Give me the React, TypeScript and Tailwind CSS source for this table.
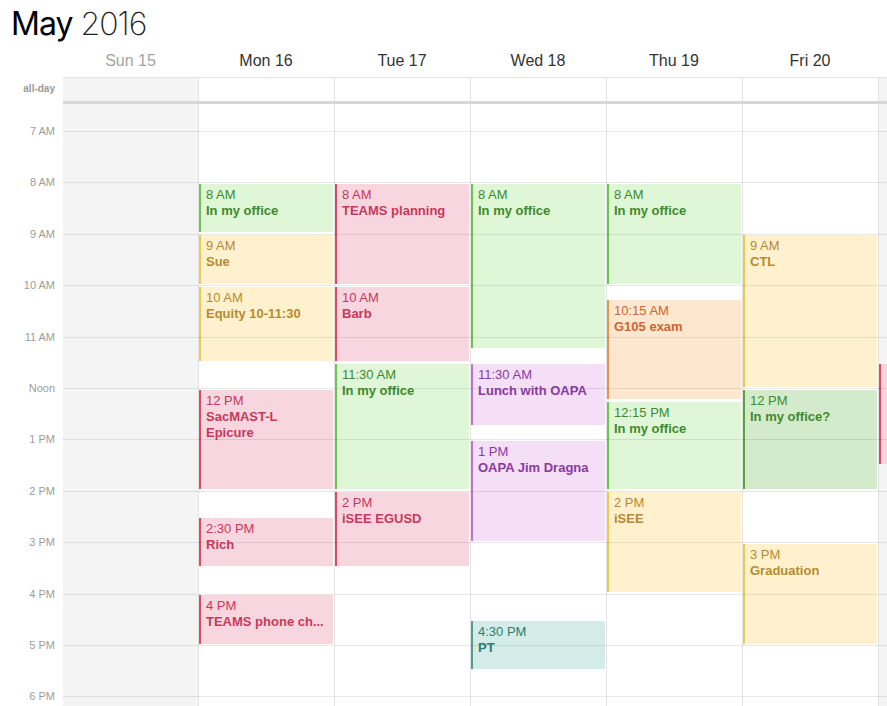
import React from "react";

const H = 51.4;
const TOP0 = 27; // offset of 7 AM line in timed area
const yOf = (h: number) => TOP0 + (h - 7) * H;

type Color = "green" | "green2" | "yellow" | "pink" | "orange" | "purple" | "teal";

const colorCls: Record<Color, string> = {
  green: "bg-[#dcf5d3]/90 border-[#6cc551] text-[#3f8a2c]",
  green2: "bg-[#d2eac8]/95 border-[#56a63a] text-[#3f8a2c]",
  yellow: "bg-[#fff0c9]/90 border-[#efc84f] text-[#b88a30]",
  pink: "bg-[#f7d1dd]/90 border-[#d84a68] text-[#c8385a]",
  orange: "bg-[#fde4c9]/90 border-[#e7954a] text-[#cf6533]",
  purple: "bg-[#f3dcf6]/90 border-[#bf74d0] text-[#8b3a9e]",
  teal: "bg-[#cfeae5]/90 border-[#4f9e90] text-[#2f7c70]",
};

type Ev = { s: number; e: number; time: string; title: string[]; c: Color };

const days: { label: string; muted?: boolean; gray?: boolean; w: string; hw: string; events: Ev[] }[] = [
  { label: "Sun 15", muted: true, gray: true, w: "w-[135px]", hw: "w-[135px]", events: [] },
  {
    label: "Mon 16",
    w: "w-[136px] border-l",
    hw: "w-[136px]",
    events: [
      { s: 8, e: 9, time: "8 AM", title: ["In my office"], c: "green" },
      { s: 9, e: 10, time: "9 AM", title: ["Sue"], c: "yellow" },
      { s: 10, e: 11.5, time: "10 AM", title: ["Equity 10-11:30"], c: "yellow" },
      { s: 12, e: 14, time: "12 PM", title: ["SacMAST-L", "Epicure"], c: "pink" },
      { s: 14.5, e: 15.5, time: "2:30 PM", title: ["Rich"], c: "pink" },
      { s: 16, e: 17, time: "4 PM", title: ["TEAMS phone ch..."], c: "pink" },
    ],
  },
  {
    label: "Tue 17",
    w: "w-[136px] border-l",
    hw: "w-[136px]",
    events: [
      { s: 8, e: 10, time: "8 AM", title: ["TEAMS planning"], c: "pink" },
      { s: 10, e: 11.5, time: "10 AM", title: ["Barb"], c: "pink" },
      { s: 11.5, e: 14, time: "11:30 AM", title: ["In my office"], c: "green" },
      { s: 14, e: 15.5, time: "2 PM", title: ["iSEE EGUSD"], c: "pink" },
    ],
  },
  {
    label: "Wed 18",
    w: "w-[136px] border-l",
    hw: "w-[136px]",
    events: [
      { s: 8, e: 11.25, time: "8 AM", title: ["In my office"], c: "green" },
      { s: 11.5, e: 12.75, time: "11:30 AM", title: ["Lunch with OAPA"], c: "purple" },
      { s: 13, e: 15, time: "1 PM", title: ["OAPA Jim Dragna"], c: "purple" },
      { s: 16.5, e: 17.5, time: "4:30 PM", title: ["PT"], c: "teal" },
    ],
  },
  {
    label: "Thu 19",
    w: "w-[136px] border-l",
    hw: "w-[136px]",
    events: [
      { s: 8, e: 10, time: "8 AM", title: ["In my office"], c: "green" },
      { s: 10.25, e: 12.25, time: "10:15 AM", title: ["G105 exam"], c: "orange" },
      { s: 12.25, e: 14, time: "12:15 PM", title: ["In my office"], c: "green" },
      { s: 14, e: 16, time: "2 PM", title: ["iSEE"], c: "yellow" },
    ],
  },
  {
    label: "Fri 20",
    w: "w-[136px] border-l",
    hw: "w-[136px]",
    events: [
      { s: 9, e: 12, time: "9 AM", title: ["CTL"], c: "yellow" },
      { s: 12, e: 14, time: "12 PM", title: ["In my office?"], c: "green2" },
      { s: 15, e: 17, time: "3 PM", title: ["Graduation"], c: "yellow" },
    ],
  },
  {
    label: "",
    gray: true,
    w: "w-[136px] border-l",
    hw: "w-[136px]",
    events: [{ s: 11.5, e: 13.5, time: "", title: [], c: "pink" }],
  },
];

const hours = ["7 AM", "8 AM", "9 AM", "10 AM", "11 AM", "Noon", "1 PM", "2 PM", "3 PM", "4 PM", "5 PM", "6 PM"];

export default function App() {
  return (
    <div
      className="w-[887px] h-[706px] overflow-hidden bg-white text-[#333]"
      style={{ fontFamily: '"Liberation Sans", Arial, sans-serif' }}
    >
      {/* Title */}
      <div
        className="h-[44px] pl-[11px] pt-[4px] leading-[40px] text-[32px] tracking-[-1px]"
        style={{ fontFamily: 'Inter, "Liberation Sans", sans-serif' }}
      >
        <span className="font-normal text-black">May</span>{" "}
        <span className="font-extralight text-[#222]">2016</span>
      </div>

      {/* Day header */}
      <div className="flex h-[33px]">
        <div className="w-[63px] shrink-0" />
        <div className="flex overflow-hidden">
          {days.map((d, i) => (
            <div
              key={i}
              className={`${d.hw} shrink-0 text-center text-[16px] leading-[33px] ${d.muted ? "text-[#a3a3a3]" : "text-[#333]"}`}
            >
              {d.label}
            </div>
          ))}
        </div>
      </div>

      {/* All-day row */}
      <div className="flex h-[24px]">
        <div className="w-[63px] shrink-0 pr-[8px] text-right text-[10px] font-bold leading-[24px] text-[#9a9a9a]">all-day</div>
        <div className="flex flex-1 overflow-hidden border-t border-[#e3e3e3]">
          {days.map((d, i) => (
            <div key={i} className={`${d.w} shrink-0 border-[#e3e3e3] ${d.gray ? "bg-[#f4f4f4]" : ""}`} />
          ))}
        </div>
      </div>
      <div className="ml-[63px] h-[3px] bg-[#d7d7d7]" />

      {/* Timed area */}
      <div className="flex h-[602px]">
        <div className="w-[63px] shrink-0 relative">
          {hours.map((h, i) => (
            <div
              key={h}
              className="absolute right-[8px] text-[11px] leading-[14px] text-[#9c9c9c]"
              style={{ top: yOf(7 + i) - 7 }}
            >
              {h}
            </div>
          ))}
        </div>
        <div className="relative flex-1 overflow-hidden">
          <div className="flex h-full">
            {days.map((d, di) => (
              <div key={di} className={`${d.w} shrink-0 border-[#e3e3e3] relative ${d.gray ? "bg-[#f4f4f4]" : ""}`}>
                {d.events.map((ev, i) => (
                  <div
                    key={i}
                    className={`absolute left-0 w-[134px] border-l-2 pl-[5px] pt-[3px] text-[13px] leading-[16px] overflow-hidden ${colorCls[ev.c]}`}
                    style={{ top: yOf(ev.s) + 1.6, height: (ev.e - ev.s) * H - 3 }}
                  >
                    {ev.time && <div className="whitespace-nowrap">{ev.time}</div>}
                    {ev.title.map((t) => (
                      <div key={t} className="font-bold whitespace-nowrap">
                        {t}
                      </div>
                    ))}
                  </div>
                ))}
              </div>
            ))}
          </div>
          {/* hour lines */}
          <div className="pointer-events-none absolute inset-0 flex flex-col">
            <div className="h-[27px] shrink-0" />
            {hours.map((h) => (
              <div key={h} className="h-[51.4px] shrink-0 border-t border-black/[0.09]" />
            ))}
          </div>
        </div>
      </div>
    </div>
  );
}
